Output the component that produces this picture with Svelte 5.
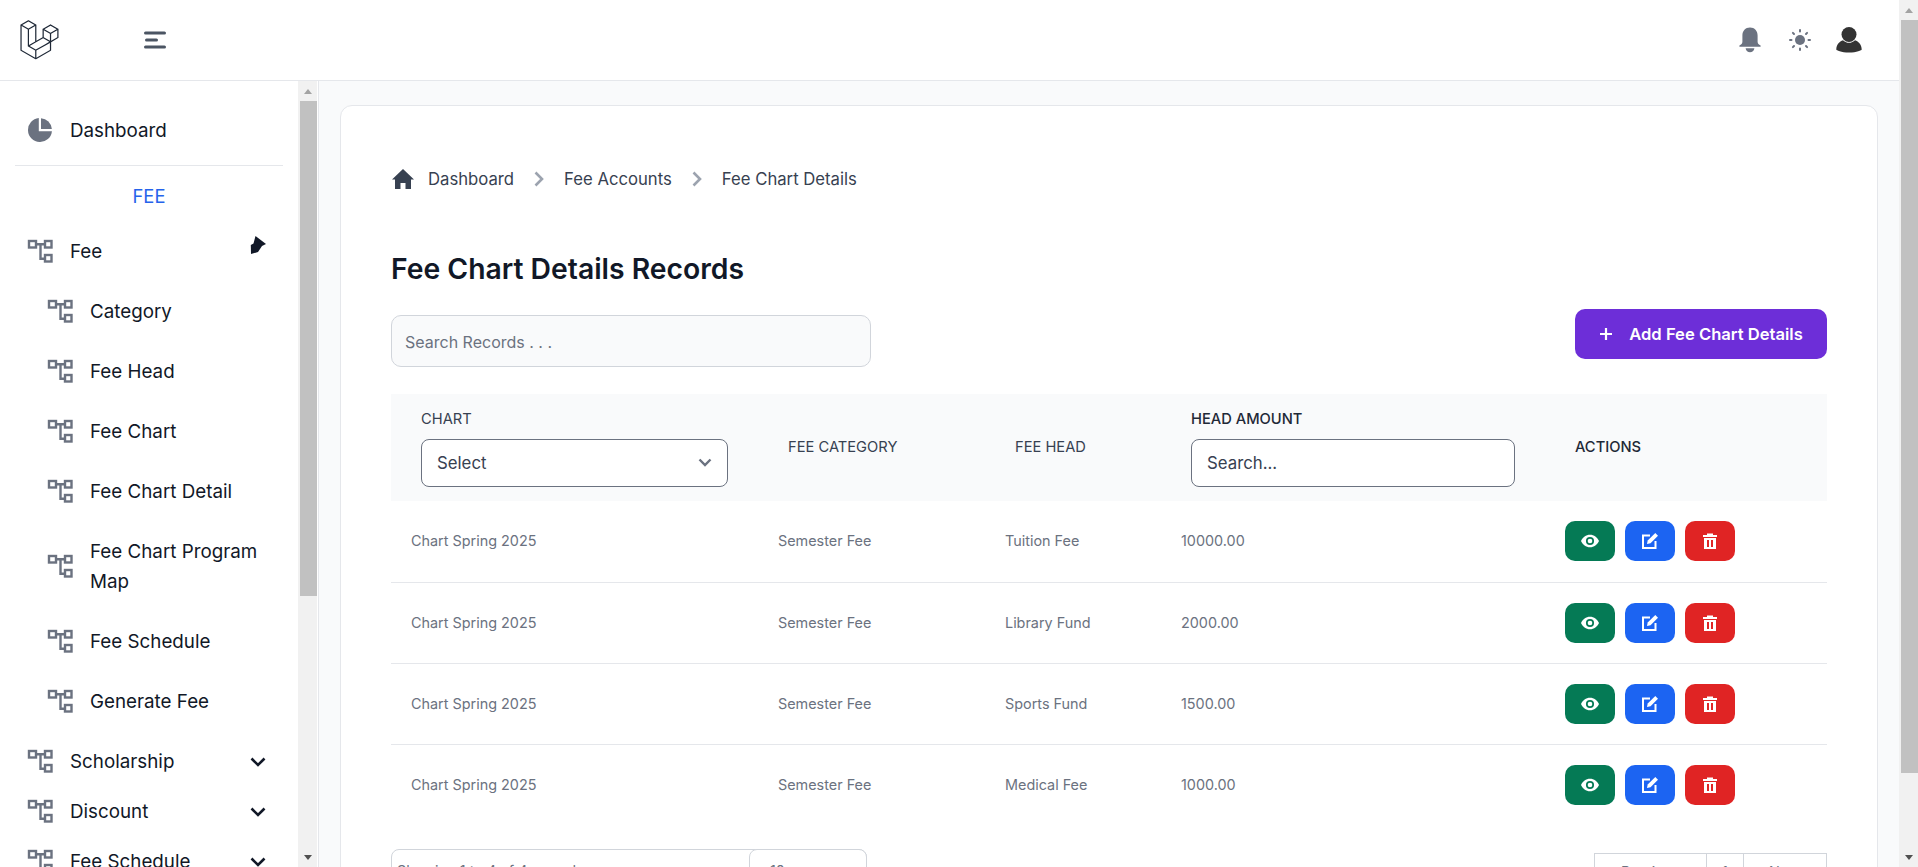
<script>
	const subItems = ['Category', 'Fee Head', 'Fee Chart', 'Fee Chart Detail', 'Fee Chart Program Map', 'Fee Schedule', 'Generate Fee'];
	const groups = ['Scholarship', 'Discount', 'Fee Schedule'];
	const rows = [
		{ head: 'Tuition Fee', amount: '10000.00' },
		{ head: 'Library Fund', amount: '2000.00' },
		{ head: 'Sports Fund', amount: '1500.00' },
		{ head: 'Medical Fee', amount: '1000.00' }
	];
</script>

{#snippet tree()}
	<svg class="tree" viewBox="0 0 26 24" fill="none" stroke="#6b7280" stroke-width="2.4">
		<rect x="2" y="2" width="7" height="6.5" />
		<rect x="18" y="2" width="6.5" height="6.5" />
		<rect x="18" y="16" width="6.5" height="6.5" />
		<path d="M9 5.2h9M13.5 5.2v14.5H18" />
	</svg>
{/snippet}

<div class="page">
	<div class="window">
		<header class="topbar">
			<div class="brand">
				<svg class="logo" viewBox="0 0 62 65" fill="#1f2937"><path d="M61.8548 14.6253C61.8778 14.7102 61.8895 14.7978 61.8897 14.8858V28.5615C61.8898 28.737 61.8434 28.9095 61.7554 29.0614C61.6675 29.2132 61.5409 29.3392 61.3887 29.4265L49.9104 36.0351V49.1337C49.9104 49.4902 49.7209 49.8192 49.4118 49.9987L25.4519 63.7916C25.3971 63.8227 25.3372 63.8427 25.2774 63.8639C25.255 63.8714 25.2338 63.8851 25.2101 63.8913C25.0426 63.9354 24.8666 63.9354 24.6991 63.8913C24.6716 63.8838 24.6467 63.8689 24.6205 63.8589C24.5657 63.8389 24.5084 63.8215 24.456 63.7916L0.501061 49.9987C0.348882 49.9113 0.222437 49.7853 0.134469 49.6334C0.0465019 49.4816 0.000120578 49.3092 0 49.1337L0 8.10652C0 8.01678 0.0124642 7.92953 0.0348998 7.84477C0.0423783 7.8161 0.0598282 7.78993 0.0697995 7.76126C0.0884958 7.70891 0.105946 7.65531 0.133367 7.6067C0.152063 7.5743 0.179485 7.54812 0.20192 7.51821C0.230588 7.47832 0.256763 7.43719 0.290416 7.40229C0.319084 7.37362 0.356476 7.35243 0.388883 7.32751C0.425029 7.29759 0.457436 7.26518 0.498568 7.2415L12.4779 0.345059C12.6296 0.257786 12.8015 0.211853 12.9765 0.211853C13.1515 0.211853 13.3234 0.257786 13.475 0.345059L25.4531 7.2415H25.4556C25.4955 7.26643 25.5292 7.29759 25.5653 7.32626C25.5977 7.35119 25.6339 7.37362 25.6625 7.40104C25.6974 7.43719 25.7224 7.47832 25.7523 7.51821C25.7735 7.54812 25.8021 7.5743 25.8196 7.6067C25.8483 7.65656 25.8645 7.70891 25.8844 7.76126C25.8944 7.78993 25.9118 7.8161 25.9193 7.84602C25.9423 7.93096 25.954 8.01853 25.9542 8.10652V33.7317L35.9355 27.9844V14.8846C35.9355 14.7973 35.948 14.7088 35.9704 14.6253C35.9792 14.5954 35.9954 14.5692 36.0053 14.5405C36.0253 14.4882 36.0427 14.4346 36.0702 14.386C36.0888 14.3536 36.1163 14.3274 36.1375 14.2975C36.1674 14.2576 36.1923 14.2165 36.2272 14.1816C36.2559 14.1529 36.292 14.1317 36.3244 14.1068C36.3618 14.0769 36.3942 14.0445 36.4341 14.0208L48.4147 7.12434C48.5663 7.03694 48.7383 6.99094 48.9133 6.99094C49.0883 6.99094 49.2602 7.03694 49.4118 7.12434L61.3899 14.0208C61.4323 14.0457 61.4647 14.0769 61.5021 14.1055C61.5333 14.1305 61.5694 14.1529 61.5981 14.1803C61.633 14.2165 61.6579 14.2576 61.6878 14.2975C61.7103 14.3274 61.7377 14.3536 61.7551 14.386C61.7838 14.4346 61.8 14.4882 61.8199 14.5405C61.8312 14.5692 61.8474 14.5954 61.8548 14.6253ZM59.893 27.9844V16.6121L55.7013 19.0252L49.9104 22.3593V33.7317L59.8942 27.9844H59.893ZM47.9149 48.5566V37.1768L42.2187 40.4299L25.953 49.7133V61.2003L47.9149 48.5566ZM1.99677 9.83281V48.5566L23.9562 61.1991V49.7145L12.4841 43.2219L12.4804 43.2194L12.4754 43.2169C12.4368 43.1945 12.4044 43.1621 12.3682 43.1347C12.3371 43.1097 12.3009 43.0898 12.2735 43.0624L12.271 43.0586C12.2386 43.0275 12.2162 42.9888 12.1887 42.9539C12.1638 42.9203 12.1339 42.8916 12.114 42.8567L12.1127 42.853C12.0903 42.8156 12.0766 42.7707 12.0604 42.7283C12.0442 42.6909 12.023 42.656 12.013 42.6161C12.0005 42.5688 11.998 42.5177 11.9931 42.4691C11.9881 42.4317 11.9781 42.3943 11.9781 42.3569V15.5801L6.18848 12.2446L1.99677 9.83281ZM12.9777 2.36177L2.99764 8.10652L12.9752 13.8513L22.9541 8.10527L12.9752 2.36177H12.9777ZM18.1678 38.2138L23.9574 34.8809V9.83281L19.7657 12.2459L13.9749 15.5801V40.6281L18.1678 38.2138ZM48.9133 9.14105L38.9344 14.8858L48.9133 20.6305L58.8909 14.8846L48.9133 9.14105ZM47.9149 22.3593L42.124 19.0252L37.9323 16.6121V27.9844L43.7219 31.3174L47.9149 33.7317V22.3593ZM24.9533 47.987L39.59 39.631L46.9065 35.4555L36.9352 29.7145L25.4544 36.3242L14.9907 42.3482L24.9533 47.987Z" /></svg>
				<svg class="menu" viewBox="0 0 22 18" fill="none" stroke="#4b5563" stroke-width="3" stroke-linecap="round">
					<path d="M1.500 2h19M2.500 9h10M1.500 16h19" />
				</svg>
			</div>
			<div class="top-icons">
				<svg class="bell" viewBox="0 0 22 26" fill="#6b7280"><path d="M11 0.5c-4.600 0-7.600 3.400-7.600 8v6.200c0 1.600-1.200 3-3 3.800v1.200h21.200v-1.200c-1.800-.8-3-2.200-3-3.800V8.500c0-4.600-3-8-7.600-8z" /><path d="M6.600 21.200h8.800c-.4 2.400-2.200 4-4.400 4s-4-1.600-4.400-4z" /></svg>
				<svg class="sun" viewBox="0 0 22 22" fill="#6b7280" stroke="#6b7280">
					<circle cx="11" cy="11" r="5" stroke="none" />
					<path stroke-width="2" stroke-linecap="round" d="M11 1v1.500M11 19.500V21M1 11h1.500M19.500 11H21M3.900 3.900l1.100 1.100M17 17l1.100 1.100M3.900 18.100L5 17M17 5l1.100-1.100" />
				</svg>
				<svg class="user" viewBox="0 0 26 26" fill="#333"><circle cx="13" cy="7.500" r="7.500" /><path d="M7 13.200c1.400 1.500 3.700 2.600 6 2.600s4.600-1.100 6-2.600c3.600 1.300 6.700 4.400 6.700 9.300 0 .9-5 3-12.700 3S.3 23.400.3 22.500c0-4.900 3.100-8 6.700-9.300z" /></svg>
			</div>
		</header>

		<div class="body">
			<aside class="sidebar">
				<nav class="nav">
					<a class="dash">
						<svg class="pie" viewBox="0 0 24 24" fill="#6b7280"><path d="M10.800.06V13.200h13.140A12 12 0 1 1 10.800.06z" /><path d="M13 .15A12 12 0 0 1 23.850 11H13z" /></svg>
						<span>Dashboard</span>
					</a>
					<div class="sep"></div>
					<div class="section">FEE</div>
					<a class="item group-open">
						{@render tree()}
						<span>Fee</span>
						<svg class="pin" viewBox="0 0 16 18" fill="#111827"><path d="M5.500 0L16 8l-4 2-4 6-7 2-.2-9 2.700-1.500z" /></svg>
					</a>
					{#each subItems as label}
						<a class="item sub">
							{@render tree()}
							<span>{label}</span>
						</a>
					{/each}
					{#each groups as label}
						<a class="item group">
							{@render tree()}
							<span>{label}</span>
							<svg class="chev" viewBox="0 0 16 10" fill="none" stroke="#111827" stroke-width="2.600"><path d="M1.500 1.500L8 8l6.500-6.500" /></svg>
						</a>
					{/each}
				</nav>
				<div class="bar side-bar">
					<i class="up"></i>
					<b class="thumb"></b>
					<i class="down"></i>
				</div>
			</aside>

			<main class="main">
				<section class="card">
					<div class="crumbs">
						<svg class="home" viewBox="0 0 22 20" fill="#374151"><path d="M11 0L0 10.500h3V20h5.500v-6h5v6H19v-9.500h3z" /></svg>
						<span>Dashboard</span>
						<svg class="gt" viewBox="0 0 10 16" fill="none" stroke="#9ca3af" stroke-width="2.600"><path d="M1.500 1.500L8 8l-6.500 6.500" /></svg>
						<span>Fee Accounts</span>
						<svg class="gt" viewBox="0 0 10 16" fill="none" stroke="#9ca3af" stroke-width="2.600"><path d="M1.500 1.500L8 8l-6.500 6.500" /></svg>
						<span>Fee Chart Details</span>
					</div>

					<h1>Fee Chart Details Records</h1>

					<div class="tools">
						<input class="search" placeholder="Search Records . . ." />
						<button class="add">
							<svg class="plus" viewBox="0 0 14 14" fill="none" stroke="#fff" stroke-width="2.200"><path d="M7 1v12M1 7h12" /></svg>
							Add Fee Chart Details
						</button>
					</div>

					<table>
						<colgroup>
							<col style="width:367px" />
							<col style="width:227px" />
							<col style="width:176px" />
							<col style="width:384px" />
							<col />
						</colgroup>
						<thead>
							<tr>
								<th>
									<div class="lbl">CHART</div>
									<div class="fake-select">
										<span>Select</span>
										<svg viewBox="0 0 14 9" fill="none" stroke="#6b7280" stroke-width="2.400"><path d="M1.500 1.500L7 7l5.500-5.500" /></svg>
									</div>
								</th>
								<th class="plain">FEE CATEGORY</th>
								<th class="plain">FEE HEAD</th>
								<th>
									<div class="lbl dark">HEAD AMOUNT</div>
									<input class="amount" placeholder="Search..." />
								</th>
								<th class="plain dark">ACTIONS</th>
							</tr>
						</thead>
						<tbody>
							{#each rows as row}
								<tr>
									<td>Chart Spring 2025</td>
									<td>Semester Fee</td>
									<td>{row.head}</td>
									<td>{row.amount}</td>
									<td class="cell-actions">
										<div class="actions">
											<button class="act green" aria-label="View">
												<svg viewBox="0 0 20 14" fill="#fff"><path fill-rule="evenodd" d="M10 0C5.500 0 1.800 2.900 0 7c1.800 4.100 5.500 7 10 7s8.200-2.900 10-7c-1.800-4.100-5.500-7-10-7zm0 11.500a4.500 4.500 0 1 1 0-9 4.500 4.500 0 0 1 0 9z" /><circle cx="10" cy="7" r="2.600" /></svg>
											</button>
											<button class="act blue" aria-label="Edit">
												<svg viewBox="0 0 16 16" fill="none" stroke="#fff" stroke-width="2"><path d="M8 2.500H1v12.500h12.500V8" /><path fill="#fff" stroke="none" d="M13.300 0L16 2.700 8.500 10.300 5 11l.7-3.500z" /></svg>
											</button>
											<button class="act red" aria-label="Delete">
												<svg viewBox="0 0 14 16" fill="#fff"><path fill-rule="evenodd" d="M0 2h4V.5h6V2h4v2H0zM1 5h12v11H1zm3 2v7h2V7zm4 0v7h2V7z" /></svg>
											</button>
										</div>
									</td>
								</tr>
							{/each}
						</tbody>
					</table>

					<div class="foot">
						<div class="per">
							<span class="per-text">Showing 1 to 4 of 4 records per page</span>
							<span class="per-size">10</span>
						</div>
						<div class="pager">
							<span class="prev">Previous</span>
							<span class="num">1</span>
							<span class="next">Next</span>
						</div>
					</div>
				</section>
			</main>
		</div>
	</div>
	<div class="bar page-bar">
		<i class="up"></i>
		<b class="thumb"></b>
		<i class="down"></i>
	</div>
</div>

<style>
	:global(html), :global(body) {
		margin: 0;
		height: 100%;
		overflow: hidden;
	}

	.page {
		display: flex;
		height: 867px;
		overflow: hidden;
		font-family: 'Inter', 'Liberation Sans', sans-serif;
		color: #111827;
		background: #f9fafb;
	}

	.window {
		flex: 1;
		min-width: 0;
		display: flex;
		flex-direction: column;
	}

	.topbar {
		height: 80px;
		flex: none;
		display: flex;
		align-items: center;
		justify-content: space-between;
		background: #fff;
		border-bottom: 1px solid #e5e7eb;
		padding: 0 37px 0 20px;
	}

	.brand {
		display: flex;
		align-items: center;
		gap: 85px;
	}

	.logo {
		width: 39px;
		height: 40px;
	}

	.menu {
		width: 22px;
		height: 18px;
	}

	.top-icons {
		display: flex;
		align-items: center;
	}

	.bell {
		width: 22px;
		height: 26px;
	}

	.sun {
		width: 22px;
		height: 22px;
		margin-left: 28px;
	}

	.user {
		width: 26px;
		height: 26px;
		margin-left: 25px;
	}

	.body {
		flex: 1;
		display: flex;
		min-height: 0;
	}

	.sidebar {
		width: 318px;
		flex: none;
		display: flex;
		background: #fff;
		border-right: 1px solid #e5e7eb;
	}

	.nav {
		width: 298px;
		flex: none;
		overflow: hidden;
		font-size: 18.8px;
	}

	.nav a {
		display: flex;
		align-items: center;
		color: #111827;
	}

	.dash {
		padding: 37px 0 0 28px;
		height: 25px;
		gap: 18px;
	}

	.pie {
		width: 24px;
		height: 24px;
		margin-top: -2px;
	}

	.sep {
		height: 1px;
		background: #e5e7eb;
		margin: 22px 15px 0;
	}

	.section {
		text-align: center;
		color: #2563eb;
		margin: 19px 0 0;
		line-height: 22px;
		font-size: 18.4px;
	}

	.item {
		gap: 17px;
		line-height: 30px;
		padding-left: 27px;
		position: relative;
	}

	.item span {
		flex: 1;
	}

	.tree {
		width: 26px;
		height: 24px;
		flex: none;
		margin-top: -2px;
	}

	.group-open {
		margin-top: 30px;
	}

	.pin {
		position: absolute;
		left: 250px;
		top: -1px;
		width: 16px;
		height: 18px;
	}

	.sub {
		padding-left: 47px;
		margin-top: 30px;
		width: 232px;
	}

	.group {
		margin-top: 20px;
		padding-right: 32px;
	}

	.sub + .group {
		margin-top: 30px;
	}

	.chev {
		width: 16px;
		height: 10px;
		flex: none;
	}

	.bar {
		display: flex;
		flex-direction: column;
		background: #f1f1f1;
		flex: none;
	}

	.side-bar,
	.page-bar {
		width: 19px;
		padding-left: 2px;
		box-sizing: border-box;
	}

	.up,
	.down {
		display: block;
		height: 20px;
		position: relative;
		flex: none;
	}

	.up::after,
	.down::after {
		content: '';
		position: absolute;
		left: 4px;
		border-left: 4.5px solid transparent;
		border-right: 4.5px solid transparent;
	}

	.up::after {
		top: 8px;
		border-bottom: 5px solid #a3a3a3;
	}

	.down::after {
		top: 8px;
		border-top: 5px solid #505050;
	}

	.thumb {
		display: block;
		background: #c1c1c1;
		flex: none;
	}

	.side-bar .thumb {
		height: 495px;
	}

	.page-bar .thumb {
		height: 753px;
	}

	.side-bar .down,
	.page-bar .down {
		margin-top: auto;
	}

	.main {
		flex: 1;
		min-width: 0;
		padding: 24px 21px 0 21px;
		overflow: hidden;
	}

	.card {
		background: #fff;
		border: 1px solid #e5e7eb;
		border-radius: 12px;
		padding: 59px 50px 20px;
		box-sizing: border-box;
		min-height: 900px;
	}

	.crumbs {
		display: flex;
		align-items: center;
		height: 28px;
		font-size: 16.7px;
		color: #374151;
	}

	.home {
		width: 22px;
		height: 20px;
		margin: 0 14px 0 1px;
	}

	.gt {
		width: 10px;
		height: 16px;
		margin: 0 20px;
	}

	h1 {
		margin: 58px 0 0;
		font-size: 28.3px;
		line-height: 36px;
		font-weight: 600;
		color: #111827;
	}

	.tools {
		display: flex;
		justify-content: space-between;
		align-items: flex-start;
		margin-top: 22px;
	}

	.search {
		width: 480px;
		height: 52px;
		margin-top: 6px;
		box-sizing: border-box;
		border: 1px solid #d1d5db;
		border-radius: 10px;
		background: #f9fafb;
		padding: 2px 13px 0;
		font: 16px 'Inter', 'Liberation Sans', sans-serif;
	}

	.search::placeholder {
		color: #6b7280;
		opacity: 1;
	}

	.add {
		width: 252px;
		height: 50px;
		border: 0;
		border-radius: 10px;
		background: #6d2ed8;
		color: #fff;
		font: 600 16.6px 'Inter', 'Liberation Sans', sans-serif;
		display: flex;
		align-items: center;
		justify-content: center;
	}

	.plus {
		width: 14px;
		height: 14px;
		margin-right: 16px;
	}

	table {
		width: 100%;
		table-layout: fixed;
		border-collapse: collapse;
		margin-top: 27px;
	}

	thead tr {
		background: #f9fafb;
		height: 107px;
	}

	th {
		padding: 0 30px;
		text-align: left;
		font-size: 14.7px;
		font-weight: 400;
		color: #374151;
	}

	th.plain {
		padding-bottom: 2px;
	}

	th.dark,
	.dark {
		font-weight: 500;
		color: #1f2937;
	}

	.lbl {
		line-height: 20px;
		margin-bottom: 10px;
	}

	.fake-select,
	.amount {
		height: 48px;
		box-sizing: border-box;
		border: 1px solid #6b7280;
		border-radius: 8px;
		background: #fff;
		font: 400 16.8px 'Inter', 'Liberation Sans', sans-serif;
		color: #374151;
	}

	.fake-select {
		display: flex;
		align-items: center;
		justify-content: space-between;
		padding: 0 15px;
	}

	.fake-select svg {
		width: 14px;
		height: 9px;
	}

	.amount {
		width: 100%;
		padding: 0 15px;
	}

	.amount::placeholder {
		color: #374151;
		opacity: 1;
	}

	td {
		height: 81px;
		padding: 0 20px 1px;
		box-sizing: border-box;
		font-size: 14.4px;
		color: #6b7280;
		border-bottom: 1px solid #e5e7eb;
	}

	td.cell-actions {
		padding-bottom: 0;
	}

	tbody tr:last-child td {
		border-bottom: 0;
	}

	.actions {
		display: flex;
		gap: 10px;
	}

	.act {
		width: 50px;
		height: 40px;
		border: 0;
		border-radius: 10px;
		padding: 0;
		display: flex;
		align-items: center;
		justify-content: center;
	}

	.act svg {
		height: 16px;
		width: 18px;
	}

	.green { background: #057a55; }
	.blue { background: #1c64f2; }
	.red { background: #e02424; }

	.foot {
		display: flex;
		justify-content: space-between;
		margin-top: 24px;
	}

	.per,
	.pager {
		display: flex;
		height: 46px;
		box-sizing: border-box;
		font-size: 14.4px;
		color: #6b7280;
	}

	.per {
		width: 476px;
		border: 1px solid #d1d5db;
		border-radius: 8px;
		line-height: 42px;
	}

	.per-text {
		flex: 1;
		padding-left: 5px;
		white-space: nowrap;
	}

	.per-size {
		width: 118px;
		border: 1px solid #d1d5db;
		border-radius: 8px;
		margin: -1px -1px 0 0;
		padding-left: 20px;
		box-sizing: border-box;
		background: #fff;
	}

	.pager {
		border: 1px solid #d1d5db;
		margin-top: 4px;
		line-height: 36px;
	}

	.pager span {
		text-align: center;
		box-sizing: border-box;
	}

	.prev { width: 111px; }
	.num { width: 38px; border-left: 1px solid #d1d5db; border-right: 1px solid #d1d5db; }
	.next { width: 82px; }
</style>
